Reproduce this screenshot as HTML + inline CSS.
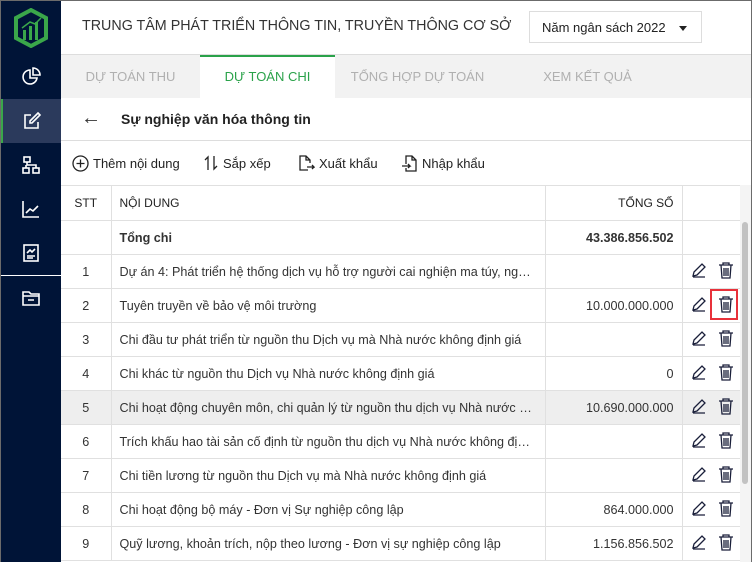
<!DOCTYPE html>
<html><head><meta charset="utf-8"><style>
*{box-sizing:border-box;margin:0;padding:0}
body{width:752px;height:562px;overflow:hidden;font-family:"Liberation Sans",Roboto,"Noto Sans CJK SC",sans-serif;background:#fff;position:relative;color:#222}
.frame{position:absolute;left:0;top:0;width:752px;height:562px;border:1px solid #6b6b6b;border-bottom:none;pointer-events:none;z-index:10}
.side{position:absolute;left:0;top:0;width:61px;height:562px;background:#001437}
.si{position:absolute;left:0;width:61px;height:44px;display:flex;align-items:center;justify-content:center}
.active{background:#2b3a5c;border-left:3px solid #3aa74a}
.hdr{position:absolute;left:61px;top:0;right:0;height:55px;border-bottom:1px solid #ddd}
.title{position:absolute;left:21px;top:18px;font-size:14.3px;color:#333}
.sel{position:absolute;left:468px;top:11px;width:173px;height:32px;border:1px solid #ddd;font-size:13px;padding:8px 12px;color:#222}
.sel:after{content:"";position:absolute;right:14px;top:14px;border:4px solid transparent;border-top:5px solid #222}
.tabs{position:absolute;left:61px;top:55px;right:0;height:43px;background:#f2f2f2}
.tab{position:absolute;top:0;height:43px;line-height:43px;font-size:13px;color:#b0b0b0;text-align:center}
.tab.on{background:#fff;color:#2aa24a;border-top:2px solid #2aa24a;line-height:40px}
.sub{position:absolute;left:61px;top:98px;right:0;height:43px;border-bottom:1px solid #ddd}
.sub b{position:absolute;left:60px;top:13px;font-size:14px;color:#222}
.tool{position:absolute;left:61px;top:141px;right:0;height:44px;font-size:13px;color:#222}
.tool span{position:absolute;top:14px;display:flex;align-items:center;gap:4px}
table{position:absolute;left:61px;top:185px;width:679px;border-collapse:collapse;font-size:12.6px;table-layout:fixed}
td{height:34px;border:1px solid #e0e0e0;padding:0 8px;white-space:nowrap;overflow:hidden;text-overflow:ellipsis;color:#333}
tr:first-child td{height:35px;font-size:12px;color:#222}
td:first-child{text-align:center;border-left:none}
.r{text-align:right}
.hl td{background:#eeeeee}
.ic{text-align:center;padding:0}
.scroll{position:absolute;left:740px;top:185px;width:11px;height:377px;background:#f4f4f4}
.thumb{position:absolute;left:742px;top:222px;width:6px;height:262px;background:#c2c2c2;border-radius:3px}
</style></head><body>
<div class="side">
 <div class="si" style="top:0;height:55px"><svg width="36" height="40" viewBox="0 0 36 40"><path d="M18 2 L33 10 V30 L18 38 L3 30 V10 Z" fill="none" stroke="#3aa74a" stroke-width="4"/><rect x="10" y="22" width="3" height="10" fill="#3aa74a"/><rect x="16" y="18" width="3" height="14" fill="#3aa74a"/><rect x="22" y="14" width="3" height="18" fill="#3aa74a"/><path d="M9 20 L17 14 L22 16 L28 10" stroke="#3aa74a" stroke-width="1.5" fill="none"/></svg></div>
 <div class="si" style="top:55px"><svg width="20" height="20" viewBox="0 0 20 20" fill="none" stroke="#fff" stroke-width="1.6"><path d="M9 3a7 7 0 1 0 7 8H9z"/><path d="M12 1v7h7a7 7 0 0 0-7-7z"/></svg></div>
 <div class="si active" style="top:99px"><svg width="20" height="20" viewBox="0 0 20 20" fill="none" stroke="#fff" stroke-width="1.6"><path d="M9 4H3v13h13v-6"/><path d="M16 2l2 2-8 8H8v-2z"/></svg></div>
 <div class="si" style="top:143px"><svg width="20" height="20" viewBox="0 0 20 20" fill="none" stroke="#fff" stroke-width="1.6"><rect x="3" y="2" width="6" height="5"/><rect x="2" y="13" width="6" height="5"/><rect x="12" y="13" width="6" height="5"/><path d="M6 7v3h9v3M5 10v3"/></svg></div>
 <div class="si" style="top:187px"><svg width="20" height="20" viewBox="0 0 20 20" fill="none" stroke="#fff" stroke-width="1.6"><path d="M2 2v16h16"/><path d="M5 14l4-4 3 2 5-5"/></svg></div>
 <div class="si" style="top:231px"><svg width="20" height="20" viewBox="0 0 20 20" fill="none" stroke="#fff" stroke-width="1.6"><rect x="3" y="2" width="14" height="16"/><path d="M6 10l3-3 2 2 3-3M6 13h8M6 15h6"/></svg></div>
 <div style="position:absolute;top:275px;left:0;width:61px;height:1px;background:#fff"></div>
 <div class="si" style="top:276px"><svg width="20" height="20" viewBox="0 0 20 20" fill="none" stroke="#fff" stroke-width="1.6"><path d="M2 4h6l2 2h8v11H2z"/><path d="M2 8h16M7 12h6"/></svg></div>
</div>
<div class="hdr"><div class="title">TRUNG TÂM PHÁT TRIỂN THÔNG TIN, TRUYỀN THÔNG CƠ SỞ</div><div class="sel">Năm ngân sách 2022</div></div>
<div class="tabs">
 <div class="tab" style="left:0;width:139px">DỰ TOÁN THU</div>
 <div class="tab on" style="left:139px;width:135px">DỰ TOÁN CHI</div>
 <div class="tab" style="left:274px;width:165px">TỔNG HỢP DỰ TOÁN</div>
 <div class="tab" style="left:439px;width:175px">XEM KẾT QUẢ</div>
</div>
<div class="sub"><span style="position:absolute;left:20px;top:9px;font-size:20px;color:#333">←</span><b>Sự nghiệp văn hóa thông tin</b></div>
<div class="tool">
 <span style="left:11px"><svg width="17" height="17" viewBox="0 0 17 17" fill="none" stroke="#222" stroke-width="1.3"><circle cx="8.5" cy="8.5" r="7.5"/><path d="M8.5 4.5v8M4.5 8.5h8"/></svg>Thêm nội dung</span>
 <span style="left:142px"><svg width="16" height="16" viewBox="0 0 16 16" fill="none" stroke="#222" stroke-width="1.3"><path d="M5 15V2L2 5M11 1v13l3-3"/></svg>Sắp xếp</span>
 <span style="left:237px"><svg width="17" height="17" viewBox="0 0 17 17" fill="none" stroke="#222" stroke-width="1.3"><path d="M10 15H2V1h6l4 4v3M8 1v4h4M9 12h7l-2-2M16 12l-2 2"/></svg>Xuất khẩu</span>
 <span style="left:340px"><svg width="17" height="17" viewBox="0 0 17 17" fill="none" stroke="#222" stroke-width="1.3"><path d="M5 9V1h6l4 4v11H5v-3M11 1v4h4M1 11h8l-2-2M9 11l-2 2"/></svg>Nhập khẩu</span>
</div>
<table>
<colgroup><col style="width:50px"><col style="width:434px"><col style="width:137px"><col style="width:58px"></colgroup>
<tr><td>STT</td><td>NỘI DUNG</td><td class="r">TỔNG SỐ</td><td></td></tr>
<tr><td></td><td><b>Tổng chi</b></td><td class="r"><b>43.386.856.502</b></td><td></td></tr>
<tr><td>1</td><td>Dự án 4: Phát triển hệ thống dịch vụ hỗ trợ người cai nghiện ma túy, người sau cai nghiện</td><td></td><td class="ic">E</td></tr>
<tr><td>2</td><td>Tuyên truyền về bảo vệ môi trường</td><td class="r">10.000.000.000</td><td class="ic">E</td></tr>
<tr><td>3</td><td>Chi đầu tư phát triển từ nguồn thu Dịch vụ mà Nhà nước không định giá</td><td></td><td class="ic">E</td></tr>
<tr><td>4</td><td>Chi khác từ nguồn thu Dịch vụ Nhà nước không định giá</td><td class="r">0</td><td class="ic">E</td></tr>
<tr class="hl"><td>5</td><td>Chi hoạt động chuyên môn, chi quản lý từ nguồn thu dịch vụ Nhà nước không định giá</td><td class="r">10.690.000.000</td><td class="ic">E</td></tr>
<tr><td>6</td><td>Trích khấu hao tài sản cố định từ nguồn thu dịch vụ Nhà nước không định giá</td><td></td><td class="ic">E</td></tr>
<tr><td>7</td><td>Chi tiền lương từ nguồn thu Dịch vụ mà Nhà nước không định giá</td><td></td><td class="ic">E</td></tr>
<tr><td>8</td><td>Chi hoạt động bộ máy - Đơn vị Sự nghiệp công lập</td><td class="r">864.000.000</td><td class="ic">E</td></tr>
<tr><td>9</td><td>Quỹ lương, khoản trích, nộp theo lương - Đơn vị sự nghiệp công lập</td><td class="r">1.156.856.502</td><td class="ic">E</td></tr>
</table>
<div class="scroll"></div><div class="thumb"></div>
<div style="position:absolute;left:710px;top:289px;width:28px;height:31px;border:2px solid #e8313a;z-index:5"></div>
<div class="frame"></div>
<script>
document.querySelectorAll('td.ic').forEach(function(t){t.innerHTML='<svg width="58" height="18" viewBox="0 0 58 18" fill="none" stroke="#1a1f3a" stroke-width="1.3"><path d="M10 15l1-4 8-8 3 3-8 8zM10 16h12"/><path d="M36 4h14M40 4V2h6v2M38 4l1 13h8l1-13M41 7v8M43 7v8M45 7v8"/></svg>';});
</script>
</body></html>
